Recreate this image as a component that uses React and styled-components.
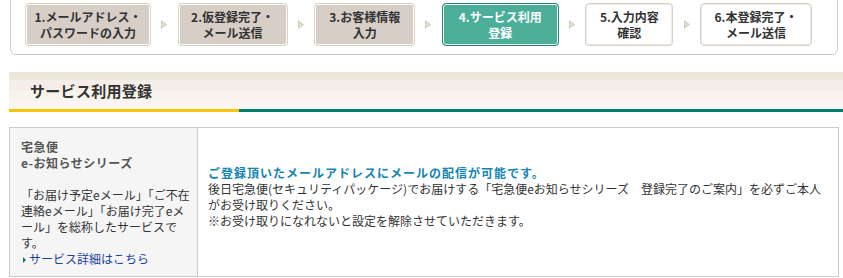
import React from 'react'
import styled, { createGlobalStyle } from 'styled-components'

const GlobalStyle = createGlobalStyle`
  body {
    margin: 0;
    background: #fff;
    font-family: "Noto Sans CJK JP", "Liberation Sans", sans-serif;
    font-size: 12px;
    color: #333;
  }
`

const steps = [
  { label: ['1.メールアドレス・', 'パスワードの入力'], width: 126, state: 'done' },
  { label: ['2.仮登録完了・', 'メール送信'], width: 110, state: 'done' },
  { label: ['3.お客様情報', '入力'], width: 101, state: 'done' },
  { label: ['4.サービス利用', '登録'], width: 117, state: 'current' },
  { label: ['5.入力内容', '確認'], width: 88, state: 'todo' },
  { label: ['6.本登録完了・', 'メール送信'], width: 112, state: 'todo' },
]

function App() {
  return (
    <>
      <GlobalStyle />
      <Page>
        <StepsBox>
          {steps.map((s, i) => (
            <React.Fragment key={i}>
              {i > 0 && (
                <Arrow>
                  <svg width="6" height="9" viewBox="0 0 6 9">
                    <polygon points="0,0 6,4.5 0,9" fill="#d3cabb" />
                    <polygon points="1,2 4,4.5 1,7" fill="#e6e0d6" />
                  </svg>
                </Arrow>
              )}
              <Step $state={s.state} style={{ width: s.width }}>
                {s.label[0]}
                <br />
                {s.label[1]}
              </Step>
            </React.Fragment>
          ))}
        </StepsBox>

        <SectionHead>
          <SectionTitle>サービス利用登録</SectionTitle>
        </SectionHead>

        <Table>
          <NameCell>
            <ServiceName>
              宅急便
              <br />
              e-お知らせシリーズ
            </ServiceName>
            <ServiceDesc>
              「お届け予定eメール」「ご不在
              <br />
              連絡eメール」「お届け完了eメ
              <br />
              ール」を総称したサービスで
              <br />
              す。
            </ServiceDesc>
            <DetailLink href="#">サービス詳細はこちら</DetailLink>
          </NameCell>
          <BodyCell>
            <div>
              <Notice>ご登録頂いたメールアドレスにメールの配信が可能です。</Notice>
              <BodyText>
                後日宅急便(セキュリティパッケージ)でお届けする「宅急便eお知らせシリーズ　登録完了のご案内」を必ずご本人
                <br />
                がお受け取りください。
                <br />
                ※お受け取りになれないと設定を解除させていただきます。
              </BodyText>
            </div>
          </BodyCell>
        </Table>
      </Page>
    </>
  )
}

export default App

const Page = styled.div`
  padding-left: 9px;
`

const StepsBox = styled.div`
  display: flex;
  align-items: center;
  margin: -8px 5px 0 1px;
  padding: 10px 0 8px 14px;
  border: 1px solid #cccccc;
  border-radius: 6px;
`

const Arrow = styled.div`
  width: 26.6px;
  display: flex;
  justify-content: center;
  align-items: center;
`

const Step = styled.div`
  box-sizing: border-box;
  height: 43px;
  display: flex;
  flex-direction: column;
  justify-content: center;
  text-align: center;
  font-weight: bold;
  font-size: 12px;
  line-height: 16px;
  white-space: nowrap;
  border-radius: 4px;
  border: 1px solid ${p => (p.$state === 'current' ? '#1e8a73' : '#d9d0c7')};
  box-shadow: inset 0 0 0 1px ${p => (p.$state === 'todo' ? '#eeeae6' : '#ffffff')};
  background: ${p =>
    p.$state === 'current' ? '#4aae99' : p.$state === 'done' ? '#d6cec7' : '#ffffff'};
  color: ${p => (p.$state === 'current' ? '#ffffff' : '#333333')};
`

const SectionHead = styled.div`
  margin-top: 17px;
  height: 37px;
  display: flex;
  align-items: center;
  padding-left: 21px;
  border-bottom: 3px solid transparent;
  background:
    linear-gradient(to right, #f7c600 230px, #00806c 230px) bottom / 100% 3px no-repeat border-box,
    linear-gradient(
      to bottom,
      #ebe3da 0 3px,
      #ece9dc 3px 8px,
      #f5ede7 8px 19px,
      #f6f4ec 19px 29px,
      #fdf5f3 29px 37px
    ) top / 100% 37px no-repeat padding-box;
`

const SectionTitle = styled.h2`
  margin: 0;
  font-size: 15px;
  font-weight: bold;
  color: #333;
  letter-spacing: 0.3px;
`

const Table = styled.div`
  display: grid;
  grid-template-columns: 188px 1fr;
  margin: 15px 4px 0 0;
  border: 1px solid #cccccc;
`

const NameCell = styled.div`
  background: #f5f5f5;
  border-right: 1px solid #cccccc;
  padding: 11px 0 9px 11px;
  line-height: 16px;
  white-space: nowrap;
`

const ServiceName = styled.div`
  font-weight: bold;
  color: #555555;
  letter-spacing: 0.5px;
`

const ServiceDesc = styled.p`
  margin: 16px 0 0;
  color: #333;
`

const DetailLink = styled.a`
  display: block;
  color: #1c3f9c;
  text-decoration: none;
  &::before {
    content: '';
    display: inline-block;
    margin: 0 3px 1px 2px;
    border-left: 3px solid #0b7c6c;
    border-top: 3px solid transparent;
    border-bottom: 3px solid transparent;
  }
`

const BodyCell = styled.div`
  display: flex;
  align-items: center;
  padding: 0 8px 10px 10px;
  line-height: 16px;
  white-space: nowrap;
`

const Notice = styled.div`
  font-weight: bold;
  color: #1385b0;
  letter-spacing: 1px;
`

const BodyText = styled.div`
  color: #333;
`
